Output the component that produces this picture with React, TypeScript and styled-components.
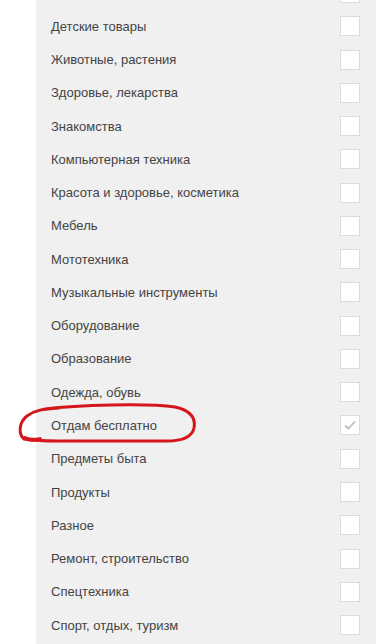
import styled, { createGlobalStyle } from 'styled-components'

const GlobalStyle = createGlobalStyle`
  html, body {
    margin: 0;
    padding: 0;
    background: #ffffff;
    overflow: hidden;
  }
`

const categories = [
  { name: 'Бытовая техника', checked: false },
  { name: 'Детские товары', checked: false },
  { name: 'Животные, растения', checked: false },
  { name: 'Здоровье, лекарства', checked: false },
  { name: 'Знакомства', checked: false },
  { name: 'Компьютерная техника', checked: false },
  { name: 'Красота и здоровье, косметика', checked: false },
  { name: 'Мебель', checked: false },
  { name: 'Мототехника', checked: false },
  { name: 'Музыкальные инструменты', checked: false },
  { name: 'Оборудование', checked: false },
  { name: 'Образование', checked: false },
  { name: 'Одежда, обувь', checked: false },
  { name: 'Отдам бесплатно', checked: true, marked: true },
  { name: 'Предметы быта', checked: false },
  { name: 'Продукты', checked: false },
  { name: 'Разное', checked: false },
  { name: 'Ремонт, строительство', checked: false },
  { name: 'Спецтехника', checked: false },
  { name: 'Спорт, отдых, туризм', checked: false }
]

export default function App() {
  return (
    <>
      <GlobalStyle />
      <Page>
        <Panel>
          {categories.map(item => (
            <Row key={item.name}>
              <Label>{item.name}</Label>
              <Box>
                {item.checked && (
                  <svg width='14' height='14' viewBox='0 0 14 14'>
                    <path d='M2 7.5 L5.5 10.5 L12 3.5' fill='none' stroke='#bdbdbd' strokeWidth='1.8' />
                  </svg>
                )}
              </Box>
              {item.marked && (
                <Mark width='182' height='44' viewBox='0 0 182 44'>
                  <path
                    d='M28 6 C60 2 130 0 158 4 C172 7 179 14 177 25 C175 34 166 38 150 38 L40 38 C25 38 14 37 7 36 C1 31 2 19 10 13 C18 7 26 6 42 5'
                    fill='none'
                    stroke='#d4161a'
                    strokeWidth='3'
                    strokeLinecap='round'
                  />
                  <path d='M8 35 C12 37 18 37 23 36' fill='none' stroke='#d4161a' strokeWidth='3.8' strokeLinecap='round' />
                </Mark>
              )}
            </Row>
          ))}
        </Panel>
      </Page>
    </>
  )
}

const { Page, Panel, Row, Label, Box, Mark } = {
  Page: styled.div`
    width: 378px;
    height: 644px;
    overflow: hidden;
    padding-left: 36px;
    box-sizing: border-box;
  `,
  Panel: styled.div`
    width: 340px;
    margin-top: -23.6px;
    padding-bottom: 20px;
    background: #f0f0f0;
    display: flex;
    flex-direction: column;
  `,
  Row: styled.div`
    position: relative;
    height: 33.28px;
    display: flex;
    align-items: center;
    justify-content: space-between;
    padding: 0 16px 0 15px;
    box-sizing: border-box;
  `,
  Label: styled.span`
    font-family: 'Liberation Sans', Arial, sans-serif;
    font-size: 13px;
    color: #444444;
  `,
  Box: styled.span`
    width: 20px;
    height: 20px;
    box-sizing: border-box;
    background: #ffffff;
    border: 1px solid #dcdcdc;
    display: flex;
    align-items: center;
    justify-content: center;
  `,
  Mark: styled.svg`
    position: absolute;
    left: -19px;
    top: -6px;
    pointer-events: none;
  `
}
